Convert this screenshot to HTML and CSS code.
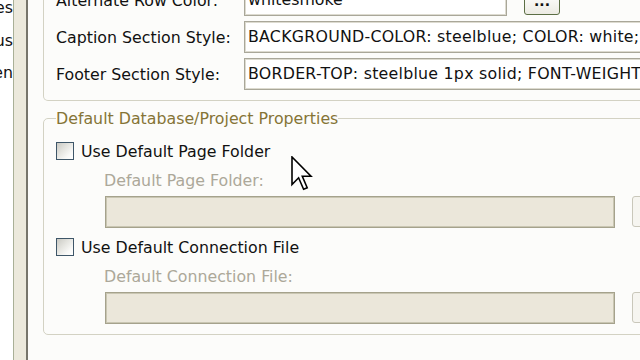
FILE: index.html
```html
<!DOCTYPE html>
<html>
<head>
<meta charset="utf-8">
<link rel="stylesheet" href="styles.css">
</head>
<body>
<div class="app">
  <div class="leftpane">
    <div class="lp-item"><span>Properties</span></div>
    <div class="lp-item"><span>Status</span></div>
    <div class="lp-item"><span>Screen</span></div>
  </div>
  <div class="splitter"></div>
  <div class="main">
    <div class="group1">
      <div class="row row-alt">
        <div class="label">Alternate Row Color:</div>
        <div class="field-wrap">
          <div class="field field-alt">whitesmoke</div>
          <div class="dots-btn">...</div>
        </div>
      </div>
      <div class="row">
        <div class="label">Caption Section Style:</div>
        <div class="field field-wide">BACKGROUND-COLOR: steelblue; COLOR: white; FONT-WEIGHT: bold</div>
      </div>
      <div class="row">
        <div class="label">Footer Section Style:</div>
        <div class="field field-wide">BORDER-TOP: steelblue 1px solid; FONT-WEIGHT: bold</div>
      </div>
    </div>

    <fieldset class="group2">
      <legend>Default Database/Project Properties</legend>
      <div class="check-row first">
        <span class="checkbox"></span>
        <span class="check-label">Use Default Page Folder</span>
      </div>
      <div class="sub-label">Default Page Folder:</div>
      <div class="disabled-row">
        <div class="field-disabled"></div>
        <div class="browse-btn"></div>
      </div>
      <div class="check-row">
        <span class="checkbox"></span>
        <span class="check-label">Use Default Connection File</span>
      </div>
      <div class="sub-label">Default Connection File:</div>
      <div class="disabled-row">
        <div class="field-disabled"></div>
        <div class="browse-btn"></div>
      </div>
    </fieldset>
  </div>
</div>
<svg class="cursor" width="22" height="36" viewBox="0 0 22 36">
  <path d="M1 1 L1 28.5 L7.6 21.8 L12.6 33.2 L16.2 31.7 L11.3 20.2 L20 20.2 Z" fill="#fff" stroke="#000" stroke-width="1.6" stroke-linejoin="miter"/>
</svg>
</body>
</html>
```
FILE: styles.css
```css
html, body {
  margin: 0;
  padding: 0;
  width: 640px;
  height: 360px;
  overflow: hidden;
  background: #fcfcfa;
  font-family: "DejaVu Sans", sans-serif;
  font-size: 15.8px;
  color: #111;
}

.app {
  display: flex;
  height: 360px;
  overflow: hidden;
  position: relative;
}

.leftpane {
  width: 13px;
  flex: none;
  background: #ffffff;
  overflow: hidden;
  margin-top: -3px;
}

.lp-item {
  display: flex;
  justify-content: flex-end;
  height: 32.5px;
  line-height: 22px;
  white-space: nowrap;
  overflow: hidden;
}

.splitter {
  width: 12px;
  flex: none;
  background: #ece9dc;
  border-left: 1px solid #a9b097;
  border-right: 2px solid #77756b;
}

.main {
  flex: 1;
  min-width: 0;
  overflow: hidden;
  background: #fcfcfa;
}

.group1 {
  margin-top: -16px;
  margin-left: 15px;
  width: 640px;
  border: 1px solid #d3d2c3;
  border-top: none;
  border-radius: 0 0 0 5px;
  padding: 0 0 10px 12px;
}

.row {
  display: grid;
  grid-template-columns: 188px 1fr;
  align-items: center;
  margin-top: 5px;
}

.row-alt {
  margin-top: 0;
  margin-bottom: 3px;
}

.label {
  white-space: nowrap;
}

.field-wrap {
  display: flex;
  align-items: flex-end;
  gap: 17px;
}

.field {
  height: 32px;
  box-sizing: border-box;
  background: #ffffff;
  border: 1px solid #a9a799;
  box-shadow: inset 0 0 0 1px #dddbd0;
  padding: 0 3px;
  line-height: 30px;
  white-space: nowrap;
  overflow: hidden;
}

.field-alt {
  width: 263px;
  flex: none;
}

.field-wide {
  width: 460px;
  letter-spacing: 0.25px;
}

.dots-btn {
  width: 36px;
  height: 23px;
  flex: none;
  box-sizing: border-box;
  margin-bottom: 1px;
  border: 1px solid #5b6e44;
  border-radius: 3px;
  background: linear-gradient(#ffffff, #ecebe3);
  text-align: center;
  line-height: 16px;
  font-weight: bold;
  font-size: 14px;
  color: #111;
}

.group2 {
  margin: 8px 0 0 15px;
  width: 640px;
  box-sizing: border-box;
  border: 1px solid #d3d2c3;
  border-radius: 5px;
  padding: 0 0 10px 12px;
  min-width: 0;
}

.group2 legend {
  padding: 0;
  color: #857436;
  line-height: 19px;
}

.check-row {
  display: flex;
  align-items: center;
  gap: 7px;
  height: 19px;
  margin-top: 9px;
}

.check-row.first {
  margin-top: 13px;
}

.checkbox {
  width: 18px;
  height: 18px;
  box-sizing: border-box;
  border: 1px solid #3e5668;
  background: linear-gradient(135deg, #c9c9c3 0%, #e4e4df 40%, #f9f9f7 75%, #ffffff 100%);
  flex: none;
}

.check-label {
  white-space: nowrap;
  padding-top: 2px;
}

.sub-label {
  margin: 11px 0 0 48px;
  line-height: 19px;
  color: #aca899;
  white-space: nowrap;
}

.disabled-row {
  display: flex;
  gap: 17px;
  margin: 6px 0 0 49px;
}

.field-disabled {
  width: 510px;
  height: 32px;
  box-sizing: border-box;
  flex: none;
  background: #ebe7da;
  border: 1px solid #a5a28c;
  box-shadow: inset 0 0 0 1px #c9c6b2;
}

.browse-btn {
  width: 40px;
  height: 31px;
  box-sizing: border-box;
  flex: none;
  border: 1px solid #c9c7ba;
  border-radius: 3px;
  background: #f6f5f0;
}

.cursor {
  position: absolute;
  left: 291px;
  top: 156px;
}
```
